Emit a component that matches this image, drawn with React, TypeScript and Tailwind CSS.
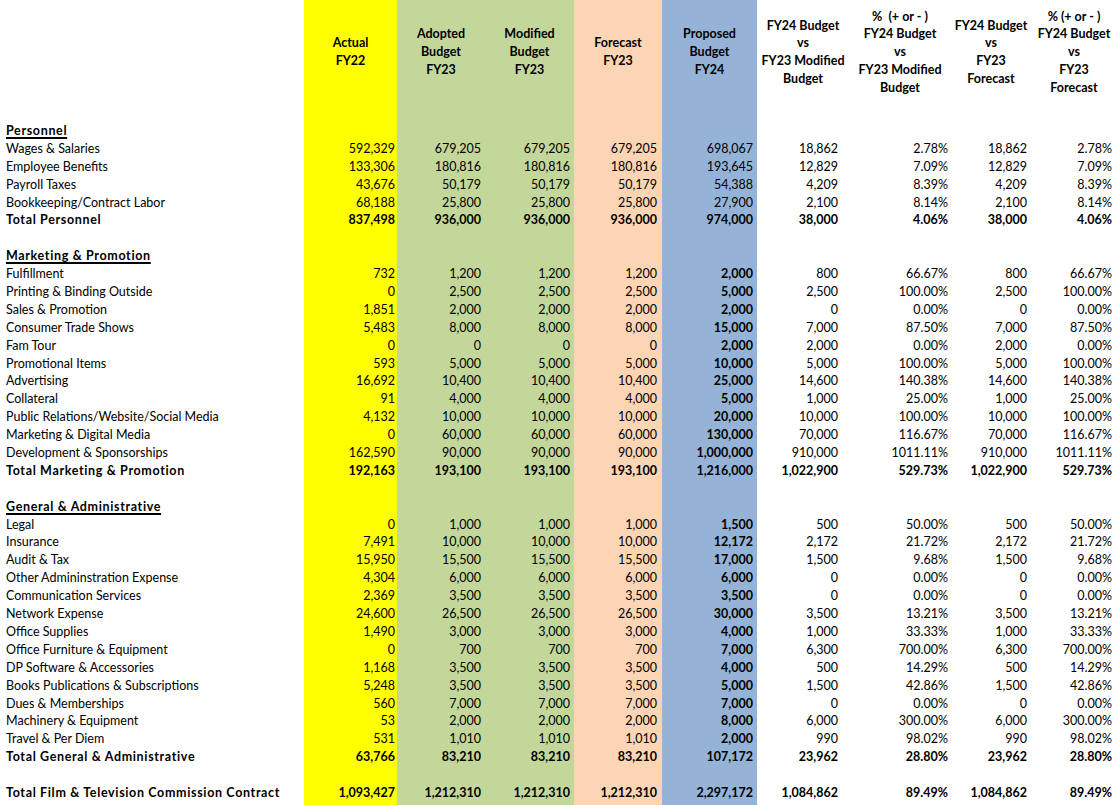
import React from 'react';

type Row = {
  label: string;
  values?: string[];
  kind?: 'item' | 'total' | 'heading' | 'blank';
  boldProposed?: boolean;
};

const colBg = [
  '',
  'bg-[#ffff00]',
  'bg-[#c4d79b]',
  'bg-[#c4d79b]',
  'bg-[#fcd5b4]',
  'bg-[#95b3d7]',
  '',
  '',
  '',
  '',
];

// right padding of each number column, taken from the sheet
const colPad = ['', 'pr-[2px]', 'pr-[4px]', 'pr-[4px]', 'pr-[5px]', 'pr-[4px]', 'pr-[11px]', 'pr-[3px]', 'pr-[4px]', 'pr-[5px]'];

const headers = [
  [],
  ['Actual', 'FY22'],
  ['Adopted', 'Budget', 'FY23'],
  ['Modified', 'Budget', 'FY23'],
  ['Forecast', 'FY23'],
  ['Proposed', 'Budget', 'FY24'],
  ['FY24 Budget', 'vs', 'FY23 Modified', 'Budget'],
  ['%  (+ or - )', 'FY24 Budget', 'vs', 'FY23 Modified', 'Budget'],
  ['FY24 Budget', 'vs', 'FY23', 'Forecast'],
  ['% (+ or - )', 'FY24 Budget', 'vs', 'FY23', 'Forecast'],
];

const item = (label: string, v: string, boldProposed = false): Row => ({
  label,
  values: v.split('|'),
  kind: 'item',
  boldProposed,
});
const total = (label: string, v: string): Row => ({ label, values: v.split('|'), kind: 'total' });

const rows: Row[] = [
  { label: 'Personnel', kind: 'heading' },
  item('Wages & Salaries', '592,329|679,205|679,205|679,205|698,067|18,862|2.78%|18,862|2.78%'),
  item('Employee Benefits', '133,306|180,816|180,816|180,816|193,645|12,829|7.09%|12,829|7.09%'),
  item('Payroll Taxes', '43,676|50,179|50,179|50,179|54,388|4,209|8.39%|4,209|8.39%'),
  item('Bookkeeping/Contract Labor', '68,188|25,800|25,800|25,800|27,900|2,100|8.14%|2,100|8.14%'),
  total('Total Personnel', '837,498|936,000|936,000|936,000|974,000|38,000|4.06%|38,000|4.06%'),
  { label: '', kind: 'blank' },
  { label: 'Marketing & Promotion', kind: 'heading' },
  item('Fulfillment', '732|1,200|1,200|1,200|2,000|800|66.67%|800|66.67%', true),
  item('Printing & Binding Outside', '0|2,500|2,500|2,500|5,000|2,500|100.00%|2,500|100.00%', true),
  item('Sales & Promotion', '1,851|2,000|2,000|2,000|2,000|0|0.00%|0|0.00%', true),
  item('Consumer Trade Shows', '5,483|8,000|8,000|8,000|15,000|7,000|87.50%|7,000|87.50%', true),
  item('Fam Tour', '0|0|0|0|2,000|2,000|0.00%|2,000|0.00%', true),
  item('Promotional Items', '593|5,000|5,000|5,000|10,000|5,000|100.00%|5,000|100.00%', true),
  item('Advertising', '16,692|10,400|10,400|10,400|25,000|14,600|140.38%|14,600|140.38%', true),
  item('Collateral', '91|4,000|4,000|4,000|5,000|1,000|25.00%|1,000|25.00%', true),
  item('Public Relations/Website/Social Media', '4,132|10,000|10,000|10,000|20,000|10,000|100.00%|10,000|100.00%', true),
  item('Marketing & Digital Media', '0|60,000|60,000|60,000|130,000|70,000|116.67%|70,000|116.67%', true),
  item('Development & Sponsorships', '162,590|90,000|90,000|90,000|1,000,000|910,000|1011.11%|910,000|1011.11%', true),
  total('Total Marketing & Promotion', '192,163|193,100|193,100|193,100|1,216,000|1,022,900|529.73%|1,022,900|529.73%'),
  { label: '', kind: 'blank' },
  { label: 'General & Administrative', kind: 'heading' },
  item('Legal', '0|1,000|1,000|1,000|1,500|500|50.00%|500|50.00%', true),
  item('Insurance', '7,491|10,000|10,000|10,000|12,172|2,172|21.72%|2,172|21.72%', true),
  item('Audit & Tax', '15,950|15,500|15,500|15,500|17,000|1,500|9.68%|1,500|9.68%', true),
  item('Other Admininstration Expense', '4,304|6,000|6,000|6,000|6,000|0|0.00%|0|0.00%', true),
  item('Communication Services', '2,369|3,500|3,500|3,500|3,500|0|0.00%|0|0.00%', true),
  item('Network Expense', '24,600|26,500|26,500|26,500|30,000|3,500|13.21%|3,500|13.21%', true),
  item('Office Supplies', '1,490|3,000|3,000|3,000|4,000|1,000|33.33%|1,000|33.33%', true),
  item('Office Furniture & Equipment', '0|700|700|700|7,000|6,300|700.00%|6,300|700.00%', true),
  item('DP Software & Accessories', '1,168|3,500|3,500|3,500|4,000|500|14.29%|500|14.29%', true),
  item('Books Publications & Subscriptions', '5,248|3,500|3,500|3,500|5,000|1,500|42.86%|1,500|42.86%', true),
  item('Dues & Memberships', '560|7,000|7,000|7,000|7,000|0|0.00%|0|0.00%', true),
  item('Machinery & Equipment', '53|2,000|2,000|2,000|8,000|6,000|300.00%|6,000|300.00%', true),
  item('Travel & Per Diem', '531|1,010|1,010|1,010|2,000|990|98.02%|990|98.02%', true),
  total('Total General & Administrative', '63,766|83,210|83,210|83,210|107,172|23,962|28.80%|23,962|28.80%'),
  { label: '', kind: 'blank' },
  total('Total Film & Television Commission Contract', '1,093,427|1,212,310|1,212,310|1,212,310|2,297,172|1,084,862|89.49%|1,084,862|89.49%'),
];

const App = () => {
  return (
    <div
      className="w-[1117px] h-[805px] overflow-hidden bg-white text-black text-[12.5px]"
      style={{ fontFamily: 'Lato, "Open Sans", sans-serif' }}
    >
      <div className="grid grid-cols-[304px_93px_88px_89px_88px_95px_92px_102px_80px_86px]">
        {/* header row */}
        {headers.map((lines, i) => (
          <div
            key={`h${i}`}
            className={`h-[122px] flex flex-col items-center justify-center pb-[18px] font-bold leading-[17.75px] text-center ${colBg[i]}`}
          >
            {lines.map((l) => (
              <span key={l} className="whitespace-pre">{l}</span>
            ))}
          </div>
        ))}

        {rows.map((row, r) => (
          <React.Fragment key={r}>
            <div
              className={`h-[17.9px] leading-[18.6px] pl-[6px] whitespace-nowrap ${
                row.kind === 'item' ? '' : 'font-bold tracking-[0.65px]'
              } ${row.kind === 'heading' ? 'underline decoration-[1.5px] underline-offset-[2px]' : ''}`}
            >
              {row.label}
            </div>
            {Array.from({ length: 9 }).map((_, c) => {
              const v = row.values ? row.values[c] : '';
              const bold = row.kind === 'total' || (row.boldProposed && c === 4);
              return (
                <div
                  key={c}
                  className={`h-[17.9px] leading-[18.6px] text-right whitespace-nowrap ${colBg[c + 1]} ${colPad[c + 1]} ${
                    bold ? 'font-bold' : ''
                  }`}
                >
                  {v}
                </div>
              );
            })}
          </React.Fragment>
        ))}

        {/* bottom filler so the coloured bands reach the edge */}
        {colBg.map((bg, i) => (
          <div key={`f${i}`} className={`h-[4px] ${bg}`} />
        ))}
      </div>
    </div>
  );
};

export default App;
